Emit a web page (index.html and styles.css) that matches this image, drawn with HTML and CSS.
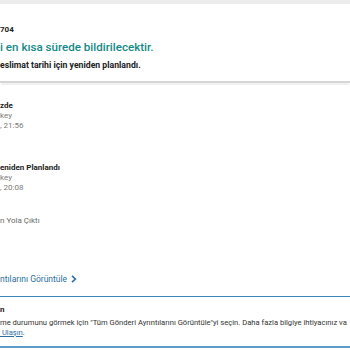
FILE: index.html
```html
<!DOCTYPE html>
<html lang="tr">
<head>
<meta charset="utf-8">
<link rel="stylesheet" href="styles.css">
</head>
<body>
<div class="topbar"></div>
<section class="summary">
  <div class="track">704</div>
  <h1 class="headline">i en kısa sürede bildirilecektir.</h1>
  <div class="status">eslimat tarihi için yeniden planlandı.</div>
</section>
<section class="timeline">
  <div class="event">
    <div class="ev-title">zde</div>
    <div class="ev-meta">key</div>
    <div class="ev-meta">, 21:56</div>
  </div>
  <div class="event ev2">
    <div class="ev-title">eniden Planlandı</div>
    <div class="ev-meta">key</div>
    <div class="ev-meta">, 20:08</div>
  </div>
  <div class="event ev3">
    <div class="ev-plain">n Yola Çıktı</div>
  </div>
</section>
<a class="details" href="#">ntılarını Görüntüle <svg class="chev" width="6" height="8" viewBox="0 0 6 8"><path d="M1 0.8 L4.4 4 L1 7.2" fill="none" stroke="#2d6fa3" stroke-width="1.6"/></svg></a>
<section class="notice">
  <div class="notice-title">n</div>
  <p class="notice-text">me durumunu görmek için "Tüm Gönderi Ayrıntılarını Görüntüle"yi seçin. Daha fazla bilgiye ihtiyacınız va<br><a class="contact" href="#">&nbsp;Ulaşın</a>.</p>
</section>
</body>
</html>
```
FILE: styles.css
```css
html, body {
  margin: 0;
  padding: 0;
  background: #ffffff;
}
body {
  font-family: Roboto, "Liberation Sans", Arial, sans-serif;
  color: #222222;
  width: 350px;
  overflow: hidden;
}
.topbar {
  height: 4px;
  background: #ececec;
}
.summary {
  padding: 21px 0 11px 0;
  border-bottom: 2px solid #d6d6d6;
  box-shadow: 0 3px 0 -1px #f1f1f1;
}
.track {
  font-size: 8px;
  line-height: 10px;
  font-weight: 700;
}
.headline {
  margin: 4px 0 5px 0;
  font-size: 11.6px;
  line-height: 16px;
  font-weight: 500;
  color: #138a87;
}
.status {
  font-size: 8.7px;
  line-height: 10px;
  font-weight: 700;
}
.timeline {
  padding-top: 18px;
}
.event {
  font-size: 8px;
  line-height: 10px;
}
.ev2 {
  margin-top: 32px;
}
.ev3 {
  margin-top: 23px;
}
.ev-title {
  font-weight: 700;
  color: #222222;
}
.ev-meta {
  color: #7a7a7a;
}
.ev-plain {
  color: #6a6a6a;
}
.details {
  display: flex;
  align-items: center;
  gap: 4px;
  margin-top: 48px;
  font-size: 8.5px;
  line-height: 10px;
  color: #2d6fa3;
  text-decoration: none;
  padding-bottom: 12px;
  border-bottom: 1.5px solid #3c86b6;
}
.chev {
  display: block;
}
.notice {
  padding-top: 8px;
  padding-bottom: 8px;
  border-bottom: 2px solid #5d9ccb;
}
.notice-title {
  font-size: 8px;
  line-height: 10px;
  font-weight: 700;
}
.notice-text {
  margin: 3px 0 0 0;
  font-size: 7.6px;
  line-height: 10px;
  color: #333333;
  white-space: nowrap;
}
.contact {
  color: #2d6fa3;
  text-decoration: underline;
}
```
